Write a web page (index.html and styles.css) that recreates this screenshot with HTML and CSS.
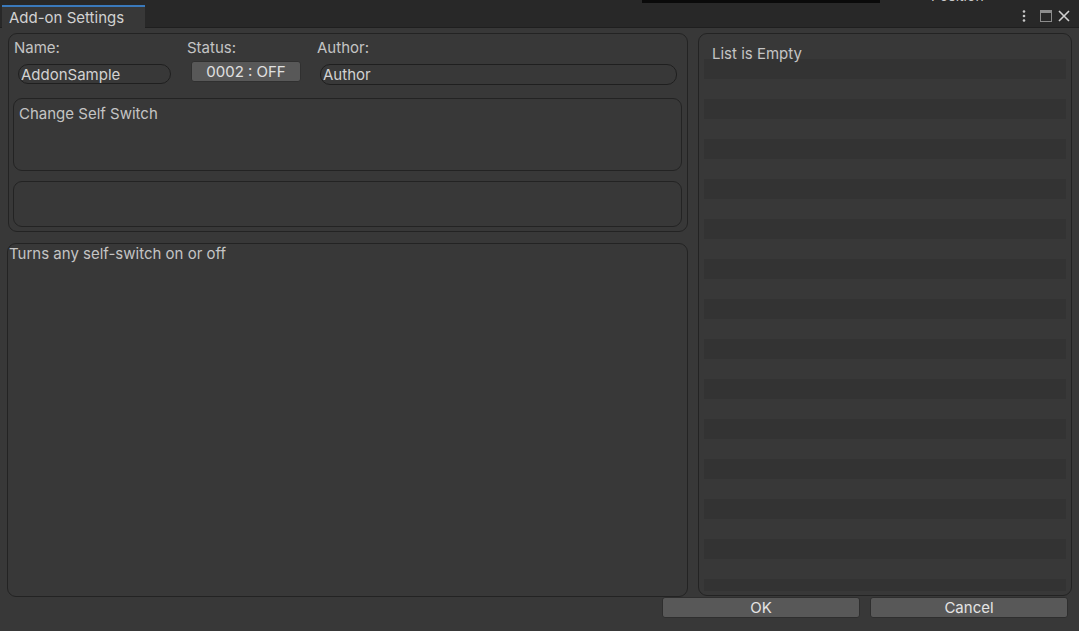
FILE: index.html
```html
<!DOCTYPE html>
<html lang="en">
<head>
    <meta charset="UTF-8">
    <title>Add-on Settings</title>
    <link rel="stylesheet" href="styles.css">
</head>
<body>
    <div class="outside">
        <div class="outside-bar"></div>
        <div class="outside-label">Position</div>
    </div>

    <div class="tabbar">
        <div class="tab">Add-on Settings</div>
        <div class="tab-icons">
            <svg class="kebab" width="4" height="12" viewBox="0 0 4 12"><circle cx="2" cy="1.5" r="1.3" fill="#c8c8c8"/><circle cx="2" cy="6" r="1.3" fill="#c8c8c8"/><circle cx="2" cy="10.5" r="1.3" fill="#c8c8c8"/></svg>
            <svg class="maximize" width="12" height="12" viewBox="0 0 12 12"><rect x="0.5" y="0.5" width="11" height="11" fill="none" stroke="#8c8c8c"/><rect x="0.5" y="0.5" width="11" height="2.5" fill="#8c8c8c"/></svg>
            <svg width="12" height="12" viewBox="0 0 12 12"><path d="M1 1 L11 11 M11 1 L1 11" stroke="#d0d0d0" stroke-width="1.6"/></svg>
        </div>
    </div>

    <div class="main">
        <div class="panes">
            <div class="left">
                <div class="info-box">
                    <div class="meta">
                        <div class="meta-col name-col">
                            <span class="label">Name:</span>
                            <div class="field name-field">AddonSample</div>
                        </div>
                        <div class="meta-col status-col">
                            <span class="label">Status:</span>
                            <button class="status-button">0002 : OFF</button>
                        </div>
                        <div class="meta-col author-col">
                            <span class="label">Author:</span>
                            <div class="field author-field">Author</div>
                        </div>
                    </div>
                    <div class="box title-box">Change Self Switch</div>
                    <div class="box empty-box"></div>
                </div>
                <div class="description">Turns any self-switch on or off</div>
            </div>
            <div class="right">
                <div class="list-rows">
                    <div class="list-title">List is Empty</div>
                </div>
            </div>
        </div>
        <div class="actions">
            <button class="action-button">OK</button>
            <button class="action-button">Cancel</button>
        </div>
    </div>
</body>
</html>
```

FILE: styles.css
```css
body {
    margin: 0;
    width: 1079px;
    height: 631px;
    overflow: hidden;
    background-color: #383838;
    font-family: Inter, "Noto Sans", sans-serif;
    font-size: 15px;
    color: #c4c4c4;
}
.outside {
    height: 3px;
    background-color: #282828;
    display: flex;
    overflow: hidden;
}
.outside-bar {
    width: 238px;
    height: 3px;
    margin-left: 642px;
    background-color: #0a0a0a;
}
.outside-label {
    margin-left: 51px;
    margin-top: -11px;
    line-height: 14px;
    font-size: 14px;
    color: #c8c8c8;
}
.tabbar {
    height: 24px;
    background-color: #282828;
    border-bottom: 1px solid #1f1f1f;
    display: flex;
    align-items: flex-start;
}
.tab {
    margin-left: 2px;
    margin-top: 2px;
    width: 136px;
    height: 20px;
    padding-left: 7px;
    padding-top: 1px;
    line-height: 20px;
    border-top: 2px solid #3a79bb;
    background-color: #383838;
    color: #d2d2d2;
}
.tab-icons {
    margin-left: auto;
    margin-right: 9px;
    margin-top: 7px;
    display: flex;
    align-items: center;
}
.tab-icons svg {
    display: block;
}
.kebab {
    margin-right: 14px;
}
.maximize {
    margin-right: 6px;
}
.main {
    padding: 5px 11px 0 7px;
}
.panes {
    display: grid;
    grid-template-columns: 681px 374px;
    gap: 10px;
    height: 564px;
}
.left {
    display: flex;
    flex-direction: column;
    gap: 11px;
}
.info-box {
    margin-left: 1px;
    height: 188px;
    border: 1px solid #232323;
    border-radius: 9px;
    padding: 5px 5px 4px 4px;
    display: flex;
    flex-direction: column;
}
.meta {
    display: flex;
    padding-left: 1px;
    height: 59px;
}
.meta-col {
    display: flex;
    flex-direction: column;
    align-items: flex-start;
}
.name-col {
    width: 173px;
}
.status-col {
    width: 130px;
}
.author-col {
    flex: 1;
    padding-right: 5px;
}
.label {
    line-height: 18px;
}
.field {
    box-sizing: border-box;
    height: 20px;
    margin-top: 7px;
    border: 1px solid #1f1f1f;
    border-radius: 10px;
    padding-left: 2px;
    line-height: 19px;
    color: #d2d2d2;
}
.name-field {
    margin-left: 4px;
    width: 153px;
}
.author-field {
    margin-left: 3px;
    width: calc(100% - 3px);
    height: 21px;
}
.status-button {
    margin-top: 4px;
    margin-left: 4px;
    width: 110px;
    height: 21px;
    padding: 0;
    border: 1px solid #303030;
    border-radius: 3px;
    background-color: #585858;
    color: #e0e0e0;
    font-family: Inter, "Noto Sans", sans-serif;
    font-size: 15px;
    line-height: 18px;
}
.box {
    border: 1px solid #232323;
    border-radius: 9px;
    box-sizing: border-box;
}
.title-box {
    height: 74px;
    padding: 6px 5px;
    line-height: 18px;
}
.empty-box {
    height: 46px;
    margin-top: 10px;
}
.description {
    flex: 1;
    border: 1px solid #232323;
    border-radius: 9px;
    padding: 1px 1px;
    line-height: 18px;
}
.right {
    height: 563px;
    box-sizing: border-box;
    border: 1px solid #232323;
    border-radius: 9px;
    padding: 11px 5px 4px 5px;
    display: flex;
    flex-direction: column;
}
.list-rows {
    flex: 1;
    background-image: linear-gradient(#333333 0, #333333 20px, #383838 20px, #383838 40px);
    background-size: 100% 40px;
    background-position: 0 14px;
}
.list-title {
    padding-left: 8px;
    line-height: 17px;
}
.actions {
    display: flex;
    justify-content: flex-end;
    gap: 10px;
    margin-top: 0;
}
.action-button {
    width: 198px;
    height: 21px;
    padding: 0;
    border: 1px solid #2e2e2e;
    border-radius: 3px;
    background-color: #585858;
    color: #e4e4e4;
    font-family: Inter, "Noto Sans", sans-serif;
    font-size: 15px;
    line-height: 18px;
}
```
